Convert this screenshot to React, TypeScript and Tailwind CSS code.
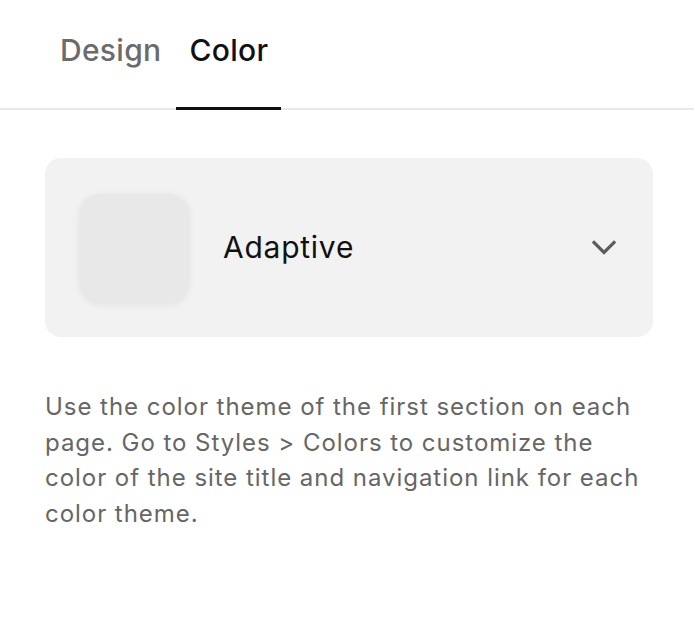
export default function App() {
  return (
    <div className="w-[694px] h-[624px] bg-white" style={{ fontFamily: 'Inter, "Noto Sans", sans-serif' }}>
      {/* Tabs */}
      <div className="flex border-b-2 border-[#e8e8e8] pl-[47px] gap-[2px]">
        <button className="px-[13px] pt-[30px] pb-[37px] text-[30px] leading-[40px] tracking-[0.01em] font-medium text-[#6b6b6b] -mb-[2px] border-b-[3px] border-transparent">
          Design
        </button>
        <button className="px-[13px] pt-[30px] pb-[37px] text-[30px] leading-[40px] tracking-[0.01em] font-medium text-[#111] -mb-[2px] border-b-[3px] border-[#111]">
          Color
        </button>
      </div>

      {/* Theme select */}
      <div className="pl-[45px] pr-[41px] pt-[48px]">
        <div className="h-[179px] rounded-[16px] bg-[#f2f2f2] flex items-center pl-[35px] pr-[37px]">
          <div className="w-[109px] h-[108px] rounded-[20px] bg-[#e8e8e8] shadow-[0_2px_8px_rgba(0,0,0,0.07)]" />
          <span className="ml-[34px] text-[30px] tracking-[0.025em] text-[#111] flex-1">Adaptive</span>
          <svg width="24" height="16" viewBox="0 0 24 16" fill="none" className="text-[#5c5c5c] mt-[1px]">
            <polyline points="2,2.5 12,12.5 22,2.5" stroke="currentColor" strokeWidth="3.2" strokeLinecap="square" />
          </svg>
        </div>

        <p className="mt-[52px] text-[24px] leading-[35.5px] tracking-[0.04em] text-[#666]">
          Use the color theme of the first section on each page. Go to Styles &gt; Colors to customize the color of the site title and navigation link for each color theme.
        </p>
      </div>
    </div>
  );
}
